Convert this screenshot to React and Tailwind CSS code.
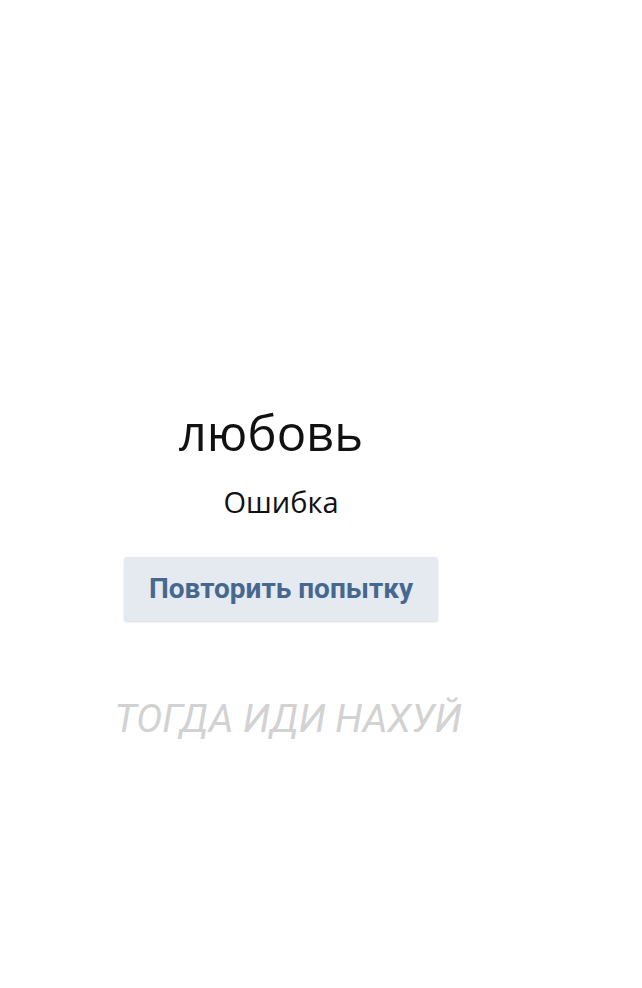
import React from 'react';

const App = () => {
  return (
    <div className="min-h-[988px] w-[642px] bg-white font-['Open_Sans','Noto_Sans',sans-serif]">
      <div className="flex w-[562px] flex-col items-center pt-[400px]">
        <h1 className="mr-[20px] text-[49px] leading-[64px] font-normal text-[#111] font-['Open_Sans',sans-serif]">любовь</h1>
        <p className="mt-[18px] text-[29px] leading-[40px] text-[#111] font-['Open_Sans',sans-serif]">Ошибка</p>
        <button className="mt-[35px] h-[64px] w-[314px] rounded-[3px] bg-[#e4eaf0] shadow-[0_1px_2px_rgba(0,0,0,0.15)] text-[28px] font-bold text-[#46688f] font-['Roboto',sans-serif]">
          Повторить попытку
        </button>
        <p className="mt-[76px] ml-[14px] text-[39px] leading-[44px] italic text-[#d2d2d2] font-['Roboto',sans-serif] whitespace-nowrap">
          ТОГДА ИДИ НАХУЙ
        </p>
      </div>
    </div>
  );
};

export default App;
